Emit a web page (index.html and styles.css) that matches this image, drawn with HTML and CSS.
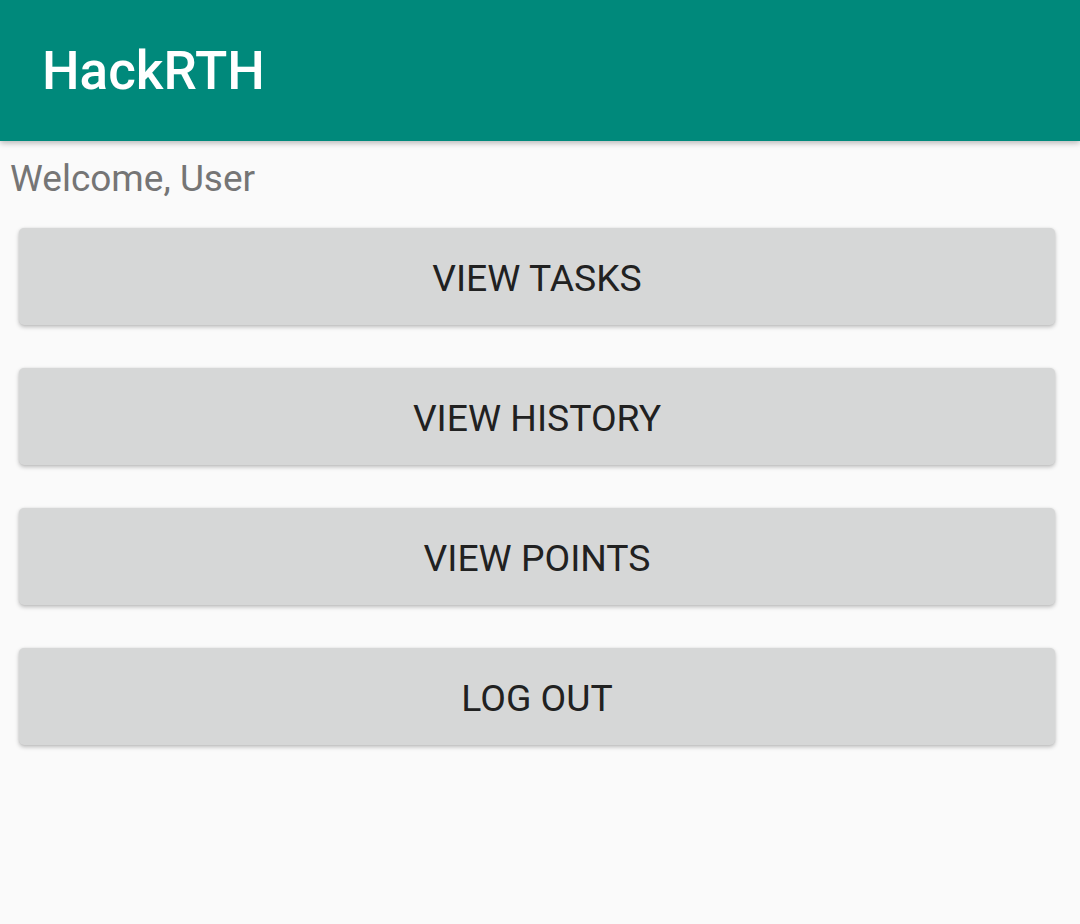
FILE: index.html
```html
<!DOCTYPE html>
<html>
<head>
<meta charset="utf-8">
<link rel="stylesheet" href="styles.css">
</head>
<body>
<header class="appbar"><h1 class="title">HackRTH</h1></header>
<main class="content">
  <p class="welcome">Welcome, User</p>
  <div class="buttons">
    <button class="btn">VIEW TASKS</button>
    <button class="btn">VIEW HISTORY</button>
    <button class="btn">VIEW POINTS</button>
    <button class="btn">LOG OUT</button>
  </div>
</main>
</body>
</html>
```
FILE: styles.css
```css
html, body {
  margin: 0;
  padding: 0;
  background: #fafafa;
  font-family: Roboto, "Noto Sans", sans-serif;
}
.appbar {
  height: 141px;
  background: #00897b;
  display: flex;
  align-items: center;
  padding-left: 42px;
  box-shadow: 0 2px 6px rgba(0,0,0,0.28);
  position: relative;
  z-index: 1;
}
.title {
  margin: 0;
  color: #fff;
  font-size: 53px;
  font-weight: 500;
  line-height: 1;
  padding-top: 2px;
}
.content {
  padding: 14px 25px 40px 10px;
}
.welcome {
  margin: 0;
  font-size: 37px;
  line-height: 48px;
  color: #757575;
}
.buttons {
  display: flex;
  flex-direction: column;
  gap: 43px;
  margin-top: 25px;
  padding-left: 9px;
}
.btn {
  height: 97px;
  border: none;
  border-radius: 5px;
  background: #d6d7d7;
  color: #212121;
  font-family: Roboto, "Noto Sans", sans-serif;
  font-size: 37.3px;
  font-weight: 400;
  box-shadow: 0 2px 4px rgba(0,0,0,0.25), 0 0 2px rgba(0,0,0,0.08);
  padding: 3px 0 0;
}
```
